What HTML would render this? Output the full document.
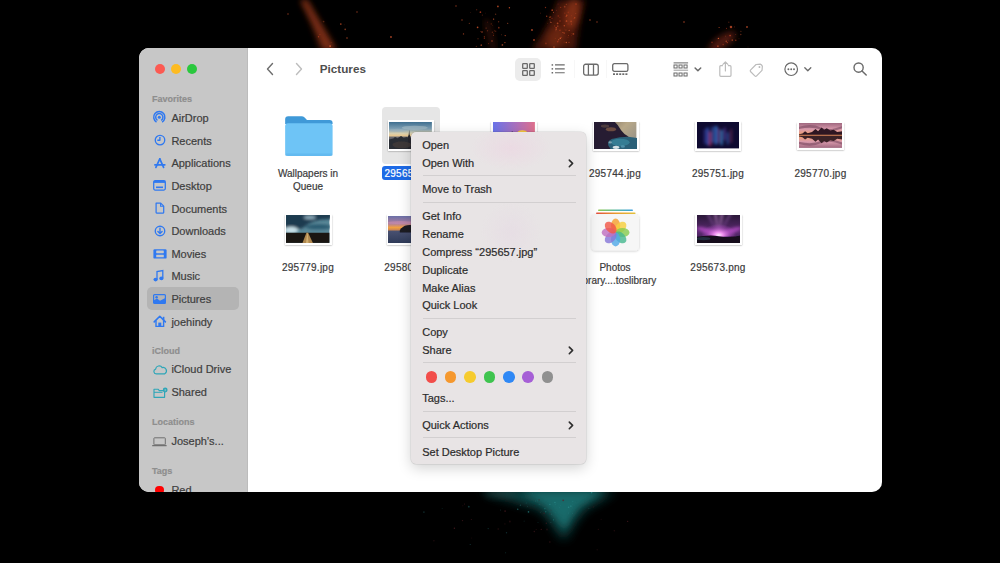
<!DOCTYPE html>
<html><head><meta charset="utf-8">
<style>
*{margin:0;padding:0;box-sizing:border-box}
html,body{width:1000px;height:563px;overflow:hidden;background:#000}
body{position:relative;font-family:"Liberation Sans",sans-serif}
.abs{position:absolute}
svg.abs{overflow:visible}
#bg{position:absolute;left:0;top:0;width:1000px;height:563px}
#win{position:absolute;left:139px;top:48px;width:743px;height:444px;border-radius:10px;overflow:hidden;background:#fff;box-shadow:inset 0 0 0 0.5px rgba(255,255,255,.35)}
#side{position:absolute;left:0;top:0;width:109px;height:444px;background:#c7c7c7;box-shadow:inset -1px 0 0 #bcbcbc}
.t{position:absolute;white-space:nowrap;line-height:1;-webkit-text-stroke:0.2px currentColor}
.si{color:#3e3e3e}
.sh{font-weight:bold;color:#8e8e8e}
.lbl{color:#3b3b3b}
.mi{color:#2b2b2b}
</style></head><body>
<svg id="bg" width="1000" height="563" viewBox="0 0 1000 563">
<defs>
<filter id="b3" x="-50%" y="-50%" width="200%" height="200%"><feGaussianBlur stdDeviation="3"/></filter>
<filter id="b6" x="-50%" y="-50%" width="200%" height="200%"><feGaussianBlur stdDeviation="6"/></filter>
<filter id="b1" x="-50%" y="-50%" width="200%" height="200%"><feGaussianBlur stdDeviation="1"/></filter>
</defs>
<path d="M300 0 L307 0 Q319 20 337 50 L321 50 Q312 22 300 0 Z" fill="#8a3018" filter="url(#b3)" opacity="0.75"/>
<path d="M304 0 Q317 24 331 50" stroke="#b04424" stroke-width="4" fill="none" filter="url(#b3)" opacity="0.45"/>
<path d="M558 0 L585 0 Q578 25 576 50 L532 50 Q550 25 558 0 Z" fill="#5a1e10" filter="url(#b3)" opacity="0.8"/>
<ellipse cx="572" cy="14" rx="7" ry="16" fill="#a8401f" filter="url(#b3)" opacity="0.55" transform="rotate(12 572 14)"/>
<ellipse cx="556" cy="38" rx="8" ry="12" fill="#8a3418" filter="url(#b3)" opacity="0.5" transform="rotate(25 556 38)"/>
<path d="M486 20 Q490 34 494 50" stroke="#5a1e10" stroke-width="6" fill="none" filter="url(#b3)" opacity="0.45"/>
<ellipse cx="722" cy="42" rx="16" ry="6" fill="#6a2412" filter="url(#b3)" opacity="0.75" transform="rotate(-35 722 42)"/>
<circle cx="559.7" cy="30.2" r="0.4" fill="#d04a24" opacity="0.71"/>
<circle cx="571.9" cy="33.8" r="0.55" fill="#d04a24" opacity="0.34"/>
<circle cx="556.2" cy="27.8" r="0.85" fill="#d04a24" opacity="0.71"/>
<circle cx="566.6" cy="30.0" r="0.4" fill="#f06a38" opacity="0.32"/>
<circle cx="564.1" cy="42.1" r="0.55" fill="#b83a1c" opacity="0.51"/>
<circle cx="550.7" cy="16.7" r="0.55" fill="#d04a24" opacity="0.59"/>
<circle cx="556.4" cy="10.2" r="0.4" fill="#d04a24" opacity="0.61"/>
<circle cx="550.9" cy="22.4" r="0.7" fill="#f06a38" opacity="0.59"/>
<circle cx="554.7" cy="25.9" r="0.55" fill="#e0582c" opacity="0.34"/>
<circle cx="558.7" cy="39.8" r="0.7" fill="#f06a38" opacity="0.44"/>
<circle cx="566.5" cy="21.0" r="0.85" fill="#e0582c" opacity="0.68"/>
<circle cx="568.0" cy="37.1" r="0.4" fill="#d04a24" opacity="0.68"/>
<circle cx="545.5" cy="7.5" r="0.7" fill="#b83a1c" opacity="0.65"/>
<circle cx="552.2" cy="10.2" r="0.85" fill="#d04a24" opacity="0.72"/>
<circle cx="571.6" cy="15.8" r="0.4" fill="#d04a24" opacity="0.67"/>
<circle cx="557.7" cy="41.6" r="0.85" fill="#b83a1c" opacity="0.66"/>
<circle cx="568.3" cy="12.4" r="0.85" fill="#b83a1c" opacity="0.38"/>
<circle cx="564.3" cy="25.7" r="0.7" fill="#e0582c" opacity="0.67"/>
<circle cx="545.9" cy="43.4" r="0.85" fill="#d04a24" opacity="0.38"/>
<circle cx="556.1" cy="29.5" r="0.55" fill="#f06a38" opacity="0.73"/>
<circle cx="560.3" cy="38.3" r="0.7" fill="#f06a38" opacity="0.78"/>
<circle cx="565.3" cy="30.1" r="0.55" fill="#e0582c" opacity="0.31"/>
<circle cx="564.8" cy="13.1" r="0.7" fill="#d04a24" opacity="0.37"/>
<circle cx="549.9" cy="17.3" r="0.7" fill="#e0582c" opacity="0.65"/>
<circle cx="549.6" cy="19.8" r="0.4" fill="#f06a38" opacity="0.75"/>
<circle cx="564.7" cy="6.7" r="0.85" fill="#f06a38" opacity="0.35"/>
<circle cx="559.9" cy="17.7" r="0.4" fill="#e0582c" opacity="0.52"/>
<circle cx="571.4" cy="35.8" r="0.4" fill="#d04a24" opacity="0.58"/>
<circle cx="540.6" cy="13.1" r="0.4" fill="#d04a24" opacity="0.74"/>
<circle cx="558.2" cy="16.0" r="0.7" fill="#b83a1c" opacity="0.60"/>
<circle cx="557.6" cy="23.3" r="0.85" fill="#f06a38" opacity="0.54"/>
<circle cx="560.1" cy="30.3" r="0.7" fill="#b83a1c" opacity="0.54"/>
<circle cx="558.1" cy="4.0" r="0.55" fill="#b83a1c" opacity="0.37"/>
<circle cx="560.0" cy="21.0" r="0.7" fill="#d04a24" opacity="0.65"/>
<circle cx="561.4" cy="37.3" r="0.55" fill="#b83a1c" opacity="0.69"/>
<circle cx="546.7" cy="16.3" r="0.7" fill="#e0582c" opacity="0.61"/>
<circle cx="564.2" cy="33.1" r="0.85" fill="#e0582c" opacity="0.40"/>
<circle cx="547.4" cy="23.2" r="0.4" fill="#b83a1c" opacity="0.54"/>
<circle cx="566.3" cy="42.5" r="0.7" fill="#f06a38" opacity="0.70"/>
<circle cx="560.6" cy="7.4" r="0.7" fill="#d04a24" opacity="0.41"/>
<circle cx="562.9" cy="32.5" r="0.55" fill="#f06a38" opacity="0.61"/>
<circle cx="576.0" cy="4.0" r="0.85" fill="#b83a1c" opacity="0.70"/>
<circle cx="573.4" cy="33.9" r="0.85" fill="#e0582c" opacity="0.54"/>
<circle cx="554.0" cy="47.0" r="0.85" fill="#f06a38" opacity="0.50"/>
<circle cx="575.7" cy="13.6" r="0.55" fill="#e0582c" opacity="0.31"/>
<circle cx="553.5" cy="12.3" r="0.55" fill="#f06a38" opacity="0.63"/>
<circle cx="555.3" cy="38.3" r="0.55" fill="#d04a24" opacity="0.31"/>
<circle cx="574.8" cy="17.8" r="0.55" fill="#f06a38" opacity="0.79"/>
<circle cx="568.1" cy="23.9" r="0.55" fill="#b83a1c" opacity="0.43"/>
<circle cx="557.8" cy="26.1" r="0.7" fill="#f06a38" opacity="0.63"/>
<circle cx="566.3" cy="4.3" r="0.55" fill="#e0582c" opacity="0.56"/>
<circle cx="571.6" cy="24.0" r="0.55" fill="#d04a24" opacity="0.69"/>
<circle cx="564.9" cy="29.1" r="0.4" fill="#d04a24" opacity="0.46"/>
<circle cx="550.6" cy="19.7" r="0.4" fill="#d04a24" opacity="0.42"/>
<circle cx="550.5" cy="21.0" r="0.4" fill="#f06a38" opacity="0.46"/>
<circle cx="574.1" cy="18.4" r="0.55" fill="#b83a1c" opacity="0.53"/>
<circle cx="552.0" cy="18.2" r="0.55" fill="#b83a1c" opacity="0.76"/>
<circle cx="566.7" cy="15.3" r="0.85" fill="#e0582c" opacity="0.51"/>
<circle cx="555.9" cy="30.7" r="0.55" fill="#f06a38" opacity="0.34"/>
<circle cx="566.2" cy="16.4" r="0.7" fill="#e0582c" opacity="0.43"/>
<circle cx="568.6" cy="35.6" r="0.4" fill="#f06a38" opacity="0.74"/>
<circle cx="569.0" cy="42.3" r="0.55" fill="#e0582c" opacity="0.65"/>
<circle cx="571.1" cy="21.4" r="0.85" fill="#e0582c" opacity="0.48"/>
<circle cx="569.2" cy="30.4" r="0.7" fill="#f06a38" opacity="0.52"/>
<circle cx="495.7" cy="31.3" r="0.7" fill="#d04a24" opacity="0.36"/>
<circle cx="492.5" cy="25.4" r="0.4" fill="#d04a24" opacity="0.43"/>
<circle cx="505.2" cy="35.6" r="0.7" fill="#e0582c" opacity="0.71"/>
<circle cx="495.6" cy="14.2" r="0.7" fill="#f06a38" opacity="0.37"/>
<circle cx="498.6" cy="21.8" r="0.7" fill="#d04a24" opacity="0.44"/>
<circle cx="487.3" cy="22.1" r="0.4" fill="#b83a1c" opacity="0.77"/>
<circle cx="470.7" cy="12.5" r="0.4" fill="#e0582c" opacity="0.33"/>
<circle cx="493.6" cy="19.1" r="0.7" fill="#f06a38" opacity="0.76"/>
<circle cx="484.3" cy="36.8" r="0.55" fill="#d04a24" opacity="0.78"/>
<circle cx="484.4" cy="38.2" r="0.7" fill="#b83a1c" opacity="0.57"/>
<circle cx="488.6" cy="43.6" r="0.55" fill="#b83a1c" opacity="0.47"/>
<circle cx="494.1" cy="31.1" r="0.4" fill="#d04a24" opacity="0.67"/>
<circle cx="477.6" cy="27.3" r="0.85" fill="#e0582c" opacity="0.77"/>
<circle cx="502.4" cy="44.9" r="0.85" fill="#f06a38" opacity="0.57"/>
<circle cx="509.4" cy="7.8" r="0.7" fill="#e0582c" opacity="0.79"/>
<circle cx="480.4" cy="12.2" r="0.85" fill="#b83a1c" opacity="0.79"/>
<circle cx="486.1" cy="28.1" r="0.7" fill="#f06a38" opacity="0.38"/>
<circle cx="504.9" cy="42.6" r="0.7" fill="#e0582c" opacity="0.65"/>
<circle cx="492.4" cy="32.3" r="0.7" fill="#f06a38" opacity="0.30"/>
<circle cx="478.0" cy="38.8" r="0.7" fill="#e0582c" opacity="0.32"/>
<circle cx="491.2" cy="23.9" r="0.55" fill="#d04a24" opacity="0.47"/>
<circle cx="493.4" cy="35.3" r="0.55" fill="#e0582c" opacity="0.55"/>
<circle cx="494.4" cy="30.3" r="0.4" fill="#e0582c" opacity="0.50"/>
<circle cx="487.5" cy="30.7" r="0.7" fill="#e0582c" opacity="0.34"/>
<circle cx="507.7" cy="23.3" r="0.55" fill="#f06a38" opacity="0.68"/>
<circle cx="482.4" cy="15.1" r="0.7" fill="#e0582c" opacity="0.32"/>
<circle cx="497.9" cy="6.4" r="0.85" fill="#e0582c" opacity="0.75"/>
<circle cx="485.3" cy="13.1" r="0.4" fill="#e0582c" opacity="0.34"/>
<circle cx="501.5" cy="34.8" r="0.4" fill="#f06a38" opacity="0.72"/>
<circle cx="469.3" cy="23.4" r="0.55" fill="#f06a38" opacity="0.43"/>
<circle cx="480.6" cy="31.3" r="0.4" fill="#d04a24" opacity="0.67"/>
<circle cx="463.5" cy="33.9" r="0.7" fill="#e0582c" opacity="0.66"/>
<circle cx="498.8" cy="27.7" r="0.85" fill="#d04a24" opacity="0.54"/>
<circle cx="476.7" cy="9.7" r="0.55" fill="#d04a24" opacity="0.60"/>
<circle cx="476.4" cy="46.4" r="0.7" fill="#e0582c" opacity="0.31"/>
<circle cx="493.8" cy="33.8" r="0.4" fill="#e0582c" opacity="0.64"/>
<circle cx="481.3" cy="45.2" r="0.85" fill="#f06a38" opacity="0.53"/>
<circle cx="730.1" cy="35.5" r="0.85" fill="#d04a24" opacity="0.71"/>
<circle cx="740.8" cy="34.5" r="0.7" fill="#f06a38" opacity="0.40"/>
<circle cx="735.8" cy="34.4" r="0.4" fill="#e0582c" opacity="0.67"/>
<circle cx="727.2" cy="42.6" r="0.7" fill="#d04a24" opacity="0.65"/>
<circle cx="725.3" cy="36.1" r="0.4" fill="#f06a38" opacity="0.64"/>
<circle cx="712.0" cy="42.3" r="0.85" fill="#b83a1c" opacity="0.49"/>
<circle cx="735.8" cy="40.3" r="0.7" fill="#b83a1c" opacity="0.72"/>
<circle cx="748.0" cy="46.9" r="0.4" fill="#b83a1c" opacity="0.43"/>
<circle cx="739.0" cy="38.8" r="0.4" fill="#b83a1c" opacity="0.76"/>
<circle cx="728.8" cy="22.3" r="0.7" fill="#d04a24" opacity="0.33"/>
<circle cx="719.1" cy="27.5" r="0.55" fill="#e0582c" opacity="0.79"/>
<circle cx="718.4" cy="38.4" r="0.7" fill="#f06a38" opacity="0.74"/>
<circle cx="734.4" cy="26.9" r="0.55" fill="#d04a24" opacity="0.32"/>
<circle cx="726.5" cy="28.4" r="0.55" fill="#b83a1c" opacity="0.54"/>
<circle cx="740.9" cy="31.3" r="0.55" fill="#f06a38" opacity="0.51"/>
<circle cx="726.2" cy="41.3" r="0.7" fill="#f06a38" opacity="0.63"/>
<circle cx="723.2" cy="44.5" r="0.85" fill="#d04a24" opacity="0.38"/>
<circle cx="732.3" cy="40.1" r="0.85" fill="#e0582c" opacity="0.53"/>
<circle cx="717.9" cy="46.2" r="0.85" fill="#e0582c" opacity="0.57"/>
<circle cx="728.3" cy="40.3" r="0.4" fill="#b83a1c" opacity="0.42"/>
<circle cx="345.2" cy="29.3" r="0.85" fill="#f06a38" opacity="0.51"/>
<circle cx="318.5" cy="36.8" r="0.7" fill="#d04a24" opacity="0.55"/>
<circle cx="319.9" cy="34.6" r="0.55" fill="#d04a24" opacity="0.44"/>
<circle cx="330.1" cy="46.1" r="0.85" fill="#f06a38" opacity="0.78"/>
<circle cx="344.2" cy="24.8" r="0.4" fill="#e0582c" opacity="0.32"/>
<circle cx="323.6" cy="21.5" r="0.85" fill="#f06a38" opacity="0.30"/>
<circle cx="340.8" cy="24.0" r="0.85" fill="#e0582c" opacity="0.69"/>
<circle cx="331.1" cy="42.5" r="0.4" fill="#f06a38" opacity="0.34"/>
<circle cx="288" cy="14" r="0.64" fill="#e05a30" opacity="0.7"/>
<circle cx="357" cy="12" r="0.64" fill="#e05a30" opacity="0.7"/>
<circle cx="391" cy="37" r="0.96" fill="#e05a30" opacity="0.7"/>
<circle cx="347" cy="38" r="0.72" fill="#e05a30" opacity="0.7"/>
<circle cx="532" cy="30" r="0.96" fill="#e05a30" opacity="0.7"/>
<circle cx="534" cy="40" r="0.88" fill="#e05a30" opacity="0.7"/>
<circle cx="590" cy="20" r="0.72" fill="#e05a30" opacity="0.7"/>
<circle cx="597" cy="22" r="0.64" fill="#e05a30" opacity="0.7"/>
<circle cx="684" cy="22" r="0.80" fill="#e05a30" opacity="0.7"/>
<circle cx="731" cy="27" r="1.28" fill="#e05a30" opacity="0.7"/>
<circle cx="747" cy="27" r="0.88" fill="#e05a30" opacity="0.7"/>
<circle cx="456" cy="6" r="0.64" fill="#e05a30" opacity="0.7"/>
<circle cx="462" cy="20" r="0.64" fill="#e05a30" opacity="0.7"/>
<circle cx="482" cy="32" r="0.80" fill="#e05a30" opacity="0.7"/>
<circle cx="492" cy="41" r="0.72" fill="#e05a30" opacity="0.7"/>
<path d="M478 490 L615 490 Q600 500 585 508 Q572 522 564 540 Q552 520 540 508 Q515 500 478 490 Z" fill="#166262" filter="url(#b6)" opacity="0.9"/>
<path d="M520 490 L605 490 Q592 498 578 506 Q570 516 565 528 Q556 514 546 504 Q532 496 520 490 Z" fill="#1d7676" filter="url(#b3)" opacity="0.6"/>
<ellipse cx="500" cy="494" rx="16" ry="4" fill="#2a5252" filter="url(#b3)" opacity="0.45"/>
<circle cx="555.2" cy="504.5" r="0.4" fill="#2a8888" opacity="0.58"/>
<circle cx="588.9" cy="508.7" r="0.4" fill="#349a9a" opacity="0.43"/>
<circle cx="532.7" cy="493.3" r="0.4" fill="#2a8888" opacity="0.34"/>
<circle cx="526.2" cy="503.0" r="0.6" fill="#1e6a6a" opacity="0.41"/>
<circle cx="552.4" cy="504.1" r="0.6" fill="#1e6a6a" opacity="0.44"/>
<circle cx="538.0" cy="522.5" r="0.4" fill="#1e6a6a" opacity="0.56"/>
<circle cx="549.9" cy="504.3" r="0.6" fill="#349a9a" opacity="0.62"/>
<circle cx="568.6" cy="507.2" r="0.8" fill="#349a9a" opacity="0.51"/>
<circle cx="553.5" cy="519.8" r="0.6" fill="#2a8888" opacity="0.55"/>
<circle cx="540.7" cy="512.6" r="0.4" fill="#1e6a6a" opacity="0.67"/>
<circle cx="540.1" cy="504.8" r="0.4" fill="#1e6a6a" opacity="0.68"/>
<circle cx="563.5" cy="515.5" r="0.6" fill="#1e6a6a" opacity="0.35"/>
<circle cx="533.5" cy="495.4" r="0.4" fill="#1e6a6a" opacity="0.51"/>
<circle cx="568.3" cy="513.0" r="0.4" fill="#2a8888" opacity="0.79"/>
<circle cx="559.5" cy="507.5" r="0.4" fill="#2a8888" opacity="0.50"/>
<circle cx="591.6" cy="492.6" r="0.8" fill="#2a8888" opacity="0.80"/>
<circle cx="572.9" cy="501.3" r="0.4" fill="#349a9a" opacity="0.77"/>
<circle cx="554.9" cy="502.5" r="0.8" fill="#349a9a" opacity="0.49"/>
<circle cx="541.1" cy="511.4" r="0.4" fill="#2a8888" opacity="0.30"/>
<circle cx="551.2" cy="514.1" r="0.4" fill="#349a9a" opacity="0.78"/>
<circle cx="560.5" cy="514.1" r="0.6" fill="#1e6a6a" opacity="0.34"/>
<circle cx="551.0" cy="498.7" r="0.8" fill="#1e6a6a" opacity="0.40"/>
<circle cx="524.1" cy="521.1" r="0.4" fill="#349a9a" opacity="0.51"/>
<circle cx="560.7" cy="505.7" r="0.4" fill="#2a8888" opacity="0.43"/>
<circle cx="545.7" cy="511.8" r="0.8" fill="#2a8888" opacity="0.43"/>
<circle cx="551.0" cy="496.5" r="0.6" fill="#1e6a6a" opacity="0.30"/>
<circle cx="570.9" cy="506.1" r="0.6" fill="#349a9a" opacity="0.78"/>
<circle cx="575.8" cy="502.2" r="0.6" fill="#1e6a6a" opacity="0.71"/>
<circle cx="572.3" cy="513.7" r="0.4" fill="#349a9a" opacity="0.45"/>
<circle cx="550.5" cy="499.6" r="0.4" fill="#1e6a6a" opacity="0.73"/>
<circle cx="517.7" cy="509.3" r="0.8" fill="#2a8888" opacity="0.56"/>
<circle cx="544.9" cy="508.7" r="0.6" fill="#2a8888" opacity="0.62"/>
<circle cx="527.6" cy="506.4" r="0.4" fill="#1e6a6a" opacity="0.74"/>
<circle cx="572.2" cy="504.4" r="0.4" fill="#2a8888" opacity="0.35"/>
<circle cx="520.4" cy="505.2" r="0.6" fill="#2a8888" opacity="0.42"/>
<circle cx="528.5" cy="511.9" r="0.8" fill="#2a8888" opacity="0.67"/>
<circle cx="573.6" cy="492.9" r="0.4" fill="#1e6a6a" opacity="0.45"/>
<circle cx="535.6" cy="501.1" r="0.8" fill="#1e6a6a" opacity="0.40"/>
<circle cx="555.3" cy="512.5" r="0.4" fill="#1e6a6a" opacity="0.74"/>
<circle cx="537.8" cy="500.8" r="0.6" fill="#1e6a6a" opacity="0.80"/>
<circle cx="539.1" cy="504.7" r="0.4" fill="#349a9a" opacity="0.53"/>
<circle cx="557.0" cy="505.2" r="0.4" fill="#1e6a6a" opacity="0.76"/>
<circle cx="572.8" cy="507.1" r="0.4" fill="#2a8888" opacity="0.39"/>
<circle cx="583.7" cy="502.8" r="0.4" fill="#1e6a6a" opacity="0.56"/>
<circle cx="549.8" cy="542.0" r="0.9" fill="#4a1a20" opacity="0.35"/>
<circle cx="462.8" cy="505.8" r="0.5" fill="#4a1a20" opacity="0.48"/>
<circle cx="541.3" cy="529.4" r="0.7" fill="#4a1a20" opacity="0.60"/>
<circle cx="500.5" cy="510.1" r="0.5" fill="#1d5558" opacity="0.50"/>
<circle cx="471.7" cy="538.1" r="0.5" fill="#5a2028" opacity="0.32"/>
<circle cx="462.5" cy="520.6" r="0.7" fill="#4a1a20" opacity="0.70"/>
<circle cx="505.1" cy="511.1" r="0.9" fill="#4a1a20" opacity="0.63"/>
<circle cx="488.2" cy="528.6" r="0.7" fill="#1d5558" opacity="0.51"/>
<circle cx="598.4" cy="529.4" r="0.7" fill="#3a1418" opacity="0.51"/>
<circle cx="498.3" cy="529.0" r="0.9" fill="#3a1418" opacity="0.40"/>
<circle cx="627.6" cy="521.4" r="0.7" fill="#4a1a20" opacity="0.71"/>
<circle cx="433.9" cy="540.7" r="0.7" fill="#5a2028" opacity="0.36"/>
<circle cx="546.3" cy="523.2" r="0.7" fill="#4a1a20" opacity="0.59"/>
<circle cx="593.4" cy="507.0" r="0.5" fill="#5a2028" opacity="0.47"/>
<circle cx="536.2" cy="529.4" r="0.5" fill="#4a1a20" opacity="0.49"/>
<circle cx="534.3" cy="505.6" r="0.5" fill="#3a1418" opacity="0.46"/>
<circle cx="464.5" cy="504.0" r="0.5" fill="#5a2028" opacity="0.62"/>
<circle cx="563.2" cy="500.3" r="0.9" fill="#5a2028" opacity="0.71"/>
<circle cx="534.3" cy="531.5" r="0.7" fill="#5a2028" opacity="0.49"/>
<circle cx="547.0" cy="529.5" r="0.9" fill="#5a2028" opacity="0.32"/>
<circle cx="442.2" cy="508.4" r="0.5" fill="#1d5558" opacity="0.36"/>
<circle cx="468.8" cy="506.7" r="0.9" fill="#1d5558" opacity="0.62"/>
<circle cx="506.5" cy="532.7" r="0.7" fill="#1d5558" opacity="0.52"/>
<circle cx="509.9" cy="521.5" r="0.9" fill="#3a1418" opacity="0.53"/>
<circle cx="454.4" cy="528.2" r="0.7" fill="#5a2028" opacity="0.71"/>
<circle cx="504.9" cy="523.9" r="0.7" fill="#3a1418" opacity="0.48"/>
<circle cx="539.1" cy="499.8" r="0.9" fill="#4a1a20" opacity="0.32"/>
<circle cx="597.2" cy="549.7" r="0.7" fill="#4a1a20" opacity="0.33"/>
<circle cx="471.3" cy="519.6" r="0.5" fill="#4a1a20" opacity="0.73"/>
<circle cx="601.1" cy="519.3" r="0.5" fill="#5a2028" opacity="0.37"/>
<circle cx="551.0" cy="510.2" r="0.5" fill="#5a2028" opacity="0.33"/>
<circle cx="470.2" cy="544.4" r="0.5" fill="#1d5558" opacity="0.75"/>
<circle cx="505.6" cy="552.7" r="0.5" fill="#1d5558" opacity="0.55"/>
<circle cx="549.9" cy="514.1" r="0.7" fill="#5a2028" opacity="0.46"/>
<circle cx="550.9" cy="522.6" r="0.5" fill="#1d5558" opacity="0.64"/>
<circle cx="544.1" cy="513.3" r="0.7" fill="#4a1a20" opacity="0.68"/>
<circle cx="614.3" cy="530.7" r="0.7" fill="#4a1a20" opacity="0.43"/>
<circle cx="423.9" cy="512.1" r="0.9" fill="#1d5558" opacity="0.43"/>
</svg>
<div id="win">
<div id="side"></div>
<div class="abs" style="left:15.75px;top:16.25px;width:10.00px;height:10.00px;border-radius:50%;background:#fc5a52"></div>
<div class="abs" style="left:31.90px;top:16.25px;width:10.00px;height:10.00px;border-radius:50%;background:#fdbb22"></div>
<div class="abs" style="left:48.00px;top:16.25px;width:10.00px;height:10.00px;border-radius:50%;background:#2ac83e"></div>
<div class="t sh" style="left:13.00px;top:46.80px;font-size:9px;">Favorites</div>
<div class="abs" style="left:8.00px;top:239.00px;width:91.50px;height:22.50px;border-radius:5px;background:#b4b4b4"></div>
<div class="t si" style="left:32.40px;top:65.10px;font-size:11px;">AirDrop</div>
<div class="t si" style="left:32.40px;top:87.72px;font-size:11px;">Recents</div>
<div class="t si" style="left:32.40px;top:110.34px;font-size:11px;">Applications</div>
<div class="t si" style="left:32.40px;top:132.96px;font-size:11px;">Desktop</div>
<div class="t si" style="left:32.40px;top:155.58px;font-size:11px;">Documents</div>
<div class="t si" style="left:32.40px;top:178.20px;font-size:11px;">Downloads</div>
<div class="t si" style="left:32.40px;top:200.82px;font-size:11px;">Movies</div>
<div class="t si" style="left:32.40px;top:223.44px;font-size:11px;">Music</div>
<div class="t si" style="left:32.40px;top:246.06px;font-size:11px;">Pictures</div>
<div class="t si" style="left:32.40px;top:268.68px;font-size:11px;">joehindy</div>
<div class="t sh" style="left:13.00px;top:299.10px;font-size:9px;">iCloud</div>
<div class="t si" style="left:32.40px;top:316.20px;font-size:11px;">iCloud Drive</div>
<div class="t si" style="left:32.40px;top:338.80px;font-size:11px;">Shared</div>
<div class="t sh" style="left:13.00px;top:370.00px;font-size:9px;">Locations</div>
<div class="t si" style="left:32.40px;top:388.00px;font-size:11px;">Joseph’s...</div>
<div class="t sh" style="left:13.00px;top:418.80px;font-size:9px;">Tags</div>
<div class="t si" style="left:32.40px;top:436.50px;font-size:11px;">Red</div>
<div class="abs" style="left:16.00px;top:437.50px;width:8.50px;height:8.50px;border-radius:50%;background:#fe0000"></div>
<svg class="abs" style="left:14.20px;top:63.20px;" width="13" height="12" viewBox="0 0 13 12"><g fill="none" stroke="#3079f0" stroke-width="1.5"><path d="M3.5 11.05 A5.6 5.6 0 1 1 9.1 11.05"/><path d="M4.5 9.3 A3.6 3.6 0 1 1 8.1 9.3"/></g><circle cx="6.3" cy="6.2" r="1.5" fill="#3079f0"/></svg>
<svg class="abs" style="left:14.50px;top:86.00px;" width="12" height="12" viewBox="0 0 12 12"><circle cx="6" cy="6.1" r="4.75" fill="none" stroke="#3079f0" stroke-width="1.35"/><path d="M5.9 3 V6.3 H3.3" fill="none" stroke="#3079f0" stroke-width="1.4" stroke-linejoin="round"/></svg>
<svg class="abs" style="left:14.50px;top:108.50px;" width="12" height="12" viewBox="0 0 12 12"><g stroke="#3079f0" stroke-width="1.7" stroke-linecap="round" fill="none"><path d="M5.8 1.8 L1.9 10.4"/><path d="M5.8 1.8 L9.6 10.4"/><path d="M0.9 7.8 H10.8"/></g></svg>
<svg class="abs" style="left:13.50px;top:132.00px;" width="13" height="11" viewBox="0 0 13 11"><rect x="0.7" y="0.7" width="11.6" height="9.4" rx="1.5" fill="none" stroke="#3079f0" stroke-width="1.3"/><rect x="0.7" y="0.7" width="11.6" height="2.2" fill="#3079f0"/><rect x="3" y="6.5" width="7" height="1.6" fill="#3079f0"/></svg>
<svg class="abs" style="left:16.00px;top:154.30px;" width="10" height="13" viewBox="0 0 10 13"><path d="M1.1 1.1 H5.7 L8.7 4.1 V10.6 Q8.7 11.1 8.2 11.1 H1.6 Q1.1 11.1 1.1 10.6 Z" fill="none" stroke="#3079f0" stroke-width="1.25" stroke-linejoin="round"/><path d="M5.6 1.1 V4.2 H8.7" fill="none" stroke="#3079f0" stroke-width="1.1"/></svg>
<svg class="abs" style="left:14.50px;top:176.50px;" width="12" height="12" viewBox="0 0 12 12"><circle cx="6" cy="6" r="4.75" fill="none" stroke="#3079f0" stroke-width="1.35"/><path d="M6 3.2 V8.4 M3.9 6.4 L6 8.5 L8.1 6.4" fill="none" stroke="#3079f0" stroke-width="1.35" stroke-linecap="round" stroke-linejoin="round"/></svg>
<svg class="abs" style="left:13.50px;top:199.50px;" width="14" height="12" viewBox="0 0 14 12"><rect x="0.4" y="1.3" width="13.2" height="9.3" rx="1.2" fill="#3079f0"/><rect x="3.2" y="2.6" width="7.6" height="2.6" rx="0.4" fill="#c7c7c7"/><rect x="3.2" y="6.7" width="7.6" height="2.6" rx="0.4" fill="#c7c7c7"/></svg>
<svg class="abs" style="left:14.20px;top:222.00px;" width="11" height="12" viewBox="0 0 11 12"><path d="M4 9.5 V1.6 L9.8 0.6 V8" fill="none" stroke="#3079f0" stroke-width="1.3"/><ellipse cx="2.6" cy="9.6" rx="2.1" ry="1.8" fill="#3079f0"/><ellipse cx="8.4" cy="8.4" rx="2.1" ry="1.8" fill="#3079f0"/></svg>
<svg class="abs" style="left:14.30px;top:246.00px;" width="13" height="10" viewBox="0 0 13 10"><rect x="0.6" y="0.6" width="11.8" height="8.8" rx="1" fill="none" stroke="#3079f0" stroke-width="1.2"/><path d="M0.6 9.4 L0.6 6.5 L4 4.5 L7 6.8 L12.4 4 L12.4 9.4 Z" fill="#3079f0"/><circle cx="3.6" cy="3.2" r="1.2" fill="#3079f0"/></svg>
<svg class="abs" style="left:13.50px;top:266.50px;" width="14" height="13" viewBox="0 0 14 13"><path d="M1.2 6.9 L6.8 1.3 L12.4 6.9" fill="none" stroke="#3079f0" stroke-width="1.6" stroke-linecap="round" stroke-linejoin="round"/><rect x="9.8" y="1.8" width="1.6" height="3.4" fill="#3079f0"/><path d="M3 5.6 V11.4 H10.6 V5.6" fill="none" stroke="#3079f0" stroke-width="1.4"/><rect x="5.3" y="7.6" width="3" height="3.8" fill="#3079f0"/></svg>
<svg class="abs" style="left:13.50px;top:317.00px;" width="15" height="10" viewBox="0 0 15 10"><path d="M3.2 8.8 A2.4 2.4 0 0 1 2.6 4.1 A3.6 3.6 0 0 1 9.2 2.6 A3.4 3.4 0 0 1 11.8 8.8 Z" fill="none" stroke="#2ea6b8" stroke-width="1.2" stroke-linejoin="round"/></svg>
<svg class="abs" style="left:13.50px;top:339.00px;" width="15" height="12" viewBox="0 0 15 12"><path d="M1 2.2 H5 L6.3 3.6 H11.6 V10.3 H1 Z" fill="none" stroke="#2ea6b8" stroke-width="1.15" stroke-linejoin="round"/><path d="M1 5.3 H9.5" stroke="#2ea6b8" stroke-width="1"/><circle cx="12.2" cy="3" r="2.4" fill="#2ea6b8"/><path d="M12.2 2 V4.2" stroke="#c7c7c7" stroke-width="0.7"/></svg>
<svg class="abs" style="left:13.00px;top:388.50px;" width="16" height="10" viewBox="0 0 16 10"><rect x="1.9" y="0.8" width="11.4" height="7" rx="0.6" fill="none" stroke="#707070" stroke-width="1"/><path d="M0.2 8.6 H14.6" stroke="#707070" stroke-width="1.1"/></svg>
<svg class="abs" style="left:126.00px;top:14.00px;" width="10" height="14" viewBox="0 0 10 14"><path d="M7.5 1.5 L2.5 7 L7.5 12.5" fill="none" stroke="#6d6d6d" stroke-width="1.4" stroke-linecap="round" stroke-linejoin="round"/></svg>
<svg class="abs" style="left:154.50px;top:14.00px;" width="10" height="14" viewBox="0 0 10 14"><path d="M2.5 1.5 L7.5 7 L2.5 12.5" fill="none" stroke="#bdbdbd" stroke-width="1.4" stroke-linecap="round" stroke-linejoin="round"/></svg>
<div class="t " style="left:180.80px;top:15.20px;font-size:11.7px;color:#4e4e4e;font-weight:bold;-webkit-text-stroke:0;">Pictures</div>
<div class="abs" style="left:376.00px;top:10.00px;width:25.50px;height:22.50px;border-radius:5px;background:#ececec"></div>
<svg class="abs" style="left:382.50px;top:14.50px;" width="13" height="13" viewBox="0 0 13 13"><g fill="none" stroke="#6a6a6a" stroke-width="1.3"><rect x="0.7" y="0.7" width="4.6" height="4.6" rx="0.6"/><rect x="7.7" y="0.7" width="4.6" height="4.6" rx="0.6"/><rect x="0.7" y="7.7" width="4.6" height="4.6" rx="0.6"/><rect x="7.7" y="7.7" width="4.6" height="4.6" rx="0.6"/></g></svg>
<svg class="abs" style="left:410.50px;top:15.00px;" width="16" height="11" viewBox="0 0 16 11"><g fill="#6a6a6a"><rect x="1.6" y="1.2" width="1.5" height="1.5"/><rect x="1.6" y="5.1" width="1.5" height="1.5"/><rect x="1.6" y="9.0" width="1.5" height="1.5"/></g><g stroke="#6a6a6a" stroke-width="1.2"><path d="M5 1.95 H14.7"/><path d="M5 5.85 H14.7"/><path d="M5 9.75 H14.7"/></g></svg>
<div class="abs" style="left:434.80px;top:12.00px;width:0.80px;height:18.00px;background:#f7f7f7"></div>
<svg class="abs" style="left:442.50px;top:14.50px;" width="17" height="13" viewBox="0 0 17 13"><g fill="none" stroke="#6a6a6a" stroke-width="1.3"><rect x="1.65" y="1.25" width="14.6" height="10.8" rx="2"/><path d="M6.4 1.25 V12.05 M11.5 1.25 V12.05"/></g></svg>
<div class="abs" style="left:467.00px;top:12.00px;width:0.80px;height:18.00px;background:#f7f7f7"></div>
<svg class="abs" style="left:473.00px;top:14.50px;" width="17" height="13" viewBox="0 0 17 13"><rect x="0.7" y="0.7" width="15.2" height="7.6" rx="1.6" fill="none" stroke="#6a6a6a" stroke-width="1.3"/><g fill="#6a6a6a"><rect x="1" y="10.3" width="2" height="1.7"/><rect x="4.1" y="10.3" width="2" height="1.7"/><rect x="7.2" y="10.3" width="2" height="1.7"/><rect x="10.3" y="10.3" width="2" height="1.7"/><rect x="13.4" y="10.3" width="2" height="1.7"/></g></svg>
<svg class="abs" style="left:533.50px;top:13.50px;" width="16" height="15" viewBox="0 0 16 15"><path d="M0.6 0.9 H15.1" stroke="#6a6a6a" stroke-width="1"/><path d="M0.6 8.2 H15.1" stroke="#9a9a9a" stroke-width="1"/><path fill-rule="evenodd" fill="#6a6a6a" d="M0.50 2.5 h4.1 v3.9 h-4.1 Z M1.50 3.5 h2.1 v1.9 h-2.1 Z"/><path fill-rule="evenodd" fill="#6a6a6a" d="M5.50 2.5 h4.1 v3.9 h-4.1 Z M6.50 3.5 h2.1 v1.9 h-2.1 Z"/><path fill-rule="evenodd" fill="#6a6a6a" d="M10.50 2.5 h4.1 v3.9 h-4.1 Z M11.50 3.5 h2.1 v1.9 h-2.1 Z"/><path fill-rule="evenodd" fill="#6a6a6a" d="M0.50 10.6 h4.1 v3.9 h-4.1 Z M1.50 11.6 h2.1 v1.9 h-2.1 Z"/><path fill-rule="evenodd" fill="#6a6a6a" d="M5.50 10.6 h4.1 v3.9 h-4.1 Z M6.50 11.6 h2.1 v1.9 h-2.1 Z"/><path fill-rule="evenodd" fill="#6a6a6a" d="M10.50 10.6 h4.1 v3.9 h-4.1 Z M11.50 11.6 h2.1 v1.9 h-2.1 Z"/></svg>
<svg class="abs" style="left:554.50px;top:18.80px;" width="8" height="6" viewBox="0 0 8 6"><path d="M1.1 1 L3.9 3.8 L6.7 1" fill="none" stroke="#6a6a6a" stroke-width="1.5" stroke-linecap="round" stroke-linejoin="round"/></svg>
<svg class="abs" style="left:579.50px;top:12.50px;" width="13" height="16" viewBox="0 0 13 16"><path d="M3.9 4.7 H1.8 Q0.8 4.7 0.8 5.7 V14.3 Q0.8 15.3 1.8 15.3 H11 Q12 15.3 12 14.3 V5.7 Q12 4.7 11 4.7 H8.9" fill="none" stroke="#bcbcbc" stroke-width="1.2"/><path d="M6.4 9.9 V1 M3.9 3.4 L6.4 0.9 L8.9 3.4" fill="none" stroke="#bcbcbc" stroke-width="1.2" stroke-linecap="round" stroke-linejoin="round"/></svg>
<svg class="abs" style="left:609.50px;top:13.00px;" width="16" height="16" viewBox="0 0 16 16"><g transform="translate(8.2 8.3) rotate(-45)"><path d="M-5 -4.2 H2.6 L5.8 -1.5 Q6.6 0 5.8 1.5 L2.6 4.2 H-5 Q-6.3 4.2 -6.3 2.9 V-2.9 Q-6.3 -4.2 -5 -4.2 Z" fill="none" stroke="#bcbcbc" stroke-width="1.2" stroke-linejoin="round"/><circle cx="3.2" cy="0" r="0.95" fill="#bcbcbc"/></g></svg>
<svg class="abs" style="left:644.50px;top:14.00px;" width="15" height="15" viewBox="0 0 15 15"><circle cx="7.2" cy="7.2" r="6.3" fill="none" stroke="#6a6a6a" stroke-width="1.2"/><g fill="#6a6a6a"><circle cx="4.4" cy="7.2" r="0.95"/><circle cx="7.2" cy="7.2" r="0.95"/><circle cx="10" cy="7.2" r="0.95"/></g></svg>
<svg class="abs" style="left:664.50px;top:19.00px;" width="8" height="5" viewBox="0 0 8 5"><path d="M0.8 0.8 L3.8 3.8 L6.8 0.8" fill="none" stroke="#6a6a6a" stroke-width="1.3" stroke-linecap="round" stroke-linejoin="round"/></svg>
<svg class="abs" style="left:714.00px;top:14.00px;" width="15" height="14" viewBox="0 0 15 14"><circle cx="5.6" cy="5.6" r="4.6" fill="none" stroke="#6a6a6a" stroke-width="1.4"/><path d="M9 9 L13.2 13" stroke="#6a6a6a" stroke-width="1.5" stroke-linecap="round"/></svg>
<svg class="abs" style="left:144.50px;top:67.00px;" width="50" height="43" viewBox="0 0 50 43"><path d="M1.15 9 V4.2 Q1.15 1.2 4.2 1.2 H17.5 Q19.3 1.2 20.6 2.6 L23 5 H45.6 Q48.6 5 48.6 8 V9 Z" fill="#3f99d8"/><rect x="1.15" y="8.3" width="47.45" height="32.8" rx="3" fill="#6ec4f6"/><rect x="1.15" y="38.5" width="47.45" height="2.6" rx="1.3" fill="#5cb4ec" opacity="0.6"/></svg>
<div class="t lbl" style="left:109.00px;top:121.00px;width:120px;text-align:center;font-size:10px;">Wallpapers in</div>
<div class="t lbl" style="left:109.00px;top:134.40px;width:120px;text-align:center;font-size:10px;">Queue</div>
<div class="abs" style="left:243.00px;top:59.00px;width:58.00px;height:57.00px;border-radius:4px;background:#e6e6e6"></div>
<div class="abs" style="left:248.50px;top:72.00px;width:46.50px;height:31.00px;background:#fff;box-shadow:0 0.5px 1.6px rgba(0,0,0,.35)"></div>
<svg class="abs" style="left:250.30px;top:73.80px;overflow:hidden" width="42.90" height="27.40" viewBox="0 0 100 66" preserveAspectRatio="none"><defs><filter id="t1" x="-20%" y="-20%" width="140%" height="140%"><feGaussianBlur stdDeviation="4"/></filter><filter id="t1s" x="-20%" y="-20%" width="140%" height="140%"><feGaussianBlur stdDeviation="1.8"/></filter></defs><defs><linearGradient id="g1" x1="0" y1="0" x2="0" y2="1"><stop offset="0" stop-color="#3f6f90"/><stop offset="0.25" stop-color="#7fa0b4"/><stop offset="0.42" stop-color="#d8cfae"/><stop offset="0.5" stop-color="#e8c890"/><stop offset="0.56" stop-color="#6a6a70"/><stop offset="1" stop-color="#2a2a30"/></linearGradient></defs><rect width="100" height="66" fill="url(#g1)"/><g filter="url(#t1s)"><path d="M0 42 L10 40 L14 36 L20 39 L28 34 L34 38 L42 36 L48 40 L56 37 L64 39 L70 38 L78 41 L90 39 L100 41 L100 66 L0 66 Z" fill="#2c2e36"/><path d="M44 66 L44 36 L46 30 L47 18 L48 30 L50 36 L50 66 Z" fill="#26282e"/><ellipse cx="30" cy="55" rx="22" ry="8" fill="#4a4038" opacity="0.6"/><ellipse cx="75" cy="58" rx="20" ry="6" fill="#3a3a44" opacity="0.6"/><ellipse cx="60" cy="14" rx="30" ry="5" fill="#a8bcc4" opacity="0.6"/><ellipse cx="20" cy="20" rx="20" ry="4" fill="#9ab2c0" opacity="0.5"/></g></svg>
<div class="abs" style="left:352.00px;top:72.50px;width:45.50px;height:31.00px;background:#fff;box-shadow:0 0.5px 1.6px rgba(0,0,0,.35)"></div>
<svg class="abs" style="left:353.80px;top:74.30px;overflow:hidden" width="41.90" height="27.40" viewBox="0 0 100 66" preserveAspectRatio="none"><defs><filter id="t2" x="-20%" y="-20%" width="140%" height="140%"><feGaussianBlur stdDeviation="4"/></filter><filter id="t2s" x="-20%" y="-20%" width="140%" height="140%"><feGaussianBlur stdDeviation="1.8"/></filter></defs><defs><linearGradient id="g2" x1="0" y1="0" x2="1" y2="0"><stop offset="0" stop-color="#6a74ea"/><stop offset="0.6" stop-color="#b070b8"/><stop offset="1" stop-color="#e0708c"/></linearGradient></defs><rect width="100" height="66" fill="url(#g2)"/><circle cx="70" cy="40" r="20" fill="#ffd040"/><path d="M30 30 L36 24 L40 28 L46 22 L52 30 L52 66 L30 66 Z" fill="#2a2240"/></svg>
<div class="abs" style="left:453.50px;top:72.50px;width:46.00px;height:30.50px;background:#fff;box-shadow:0 0.5px 1.6px rgba(0,0,0,.35)"></div>
<svg class="abs" style="left:455.30px;top:74.30px;overflow:hidden" width="42.40" height="26.90" viewBox="0 0 100 66" preserveAspectRatio="none"><defs><filter id="t3" x="-20%" y="-20%" width="140%" height="140%"><feGaussianBlur stdDeviation="4"/></filter><filter id="t3s" x="-20%" y="-20%" width="140%" height="140%"><feGaussianBlur stdDeviation="1.8"/></filter></defs><defs><linearGradient id="g3" x1="0" y1="0" x2="1" y2="0.6"><stop offset="0" stop-color="#6a5a50"/><stop offset="0.6" stop-color="#b8a888"/><stop offset="1" stop-color="#9a9488"/></linearGradient></defs><rect width="100" height="66" fill="url(#g3)"/><g filter="url(#t3s)"><path d="M30 44 Q55 34 80 36 Q95 38 105 40 L105 70 L40 70 Q28 56 30 44 Z" fill="#2a6078"/><ellipse cx="62" cy="50" rx="22" ry="9" fill="#3a8aa0" opacity="0.7"/><path d="M-5 -5 L45 -5 Q58 8 64 20 Q72 32 82 36 Q60 36 42 42 Q30 48 34 58 Q38 66 44 70 L-5 70 Z" fill="#251d30"/><ellipse cx="40" cy="18" rx="12" ry="5" fill="#8a6048" opacity="0.7"/><ellipse cx="26" cy="10" rx="10" ry="4" fill="#6a5048" opacity="0.6"/><ellipse cx="52" cy="62" rx="8" ry="4" fill="#e6eef0" opacity="0.9"/><ellipse cx="38" cy="50" rx="4" ry="3" fill="#d0dce0" opacity="0.5"/><ellipse cx="68" cy="60" rx="5" ry="3" fill="#6ab0c8" opacity="0.6"/></g></svg>
<div class="abs" style="left:556.00px;top:72.50px;width:46.00px;height:30.00px;background:#fff;box-shadow:0 0.5px 1.6px rgba(0,0,0,.35)"></div>
<svg class="abs" style="left:557.80px;top:74.30px;overflow:hidden" width="42.40" height="26.40" viewBox="0 0 100 66" preserveAspectRatio="none"><defs><filter id="t4" x="-20%" y="-20%" width="140%" height="140%"><feGaussianBlur stdDeviation="4"/></filter><filter id="t4s" x="-20%" y="-20%" width="140%" height="140%"><feGaussianBlur stdDeviation="1.8"/></filter></defs><rect width="100" height="66" fill="#0e0a30"/><g filter="url(#t4)"><rect x="16" y="18" width="5" height="36" fill="#3a3aa8" opacity="0.6"/><rect x="22" y="14" width="6" height="44" fill="#3a6ad8" opacity="0.7"/><rect x="28" y="24" width="6" height="36" fill="#b02a50" opacity="0.75"/><rect x="34" y="12" width="6" height="40" fill="#4a70d0" opacity="0.6"/><rect x="42" y="10" width="6" height="46" fill="#3a88e8" opacity="0.8"/><rect x="49" y="16" width="5" height="36" fill="#8a3a90" opacity="0.6"/><rect x="55" y="20" width="6" height="38" fill="#3aa0e8" opacity="0.65"/><rect x="63" y="14" width="5" height="32" fill="#6a40b0" opacity="0.6"/><rect x="70" y="26" width="5" height="30" fill="#3070d0" opacity="0.6"/><rect x="78" y="18" width="5" height="34" fill="#a03060" opacity="0.45"/></g></svg>
<div class="abs" style="left:658.00px;top:73.50px;width:47.00px;height:28.50px;background:#fff;box-shadow:0 0.5px 1.6px rgba(0,0,0,.35)"></div>
<svg class="abs" style="left:659.80px;top:75.30px;overflow:hidden" width="43.40" height="24.90" viewBox="0 0 100 66" preserveAspectRatio="none"><defs><filter id="t5" x="-20%" y="-20%" width="140%" height="140%"><feGaussianBlur stdDeviation="4"/></filter><filter id="t5s" x="-20%" y="-20%" width="140%" height="140%"><feGaussianBlur stdDeviation="1.8"/></filter></defs><defs><linearGradient id="g5" x1="0" y1="0" x2="0" y2="1"><stop offset="0" stop-color="#a06880"/><stop offset="0.25" stop-color="#d89aac"/><stop offset="0.47" stop-color="#f0a070"/><stop offset="0.53" stop-color="#f0a070"/><stop offset="0.75" stop-color="#d89aac"/><stop offset="1" stop-color="#a06880"/></linearGradient></defs><rect width="100" height="66" fill="url(#g5)"/><g filter="url(#t5s)"><path d="M0 10 Q30 0 50 12 Q70 22 100 8 L100 14 Q70 28 50 18 Q30 8 0 16 Z" fill="#7a4a60" opacity="0.6"/><path d="M0 56 Q30 66 50 54 Q70 44 100 58 L100 52 Q70 38 50 48 Q30 58 0 50 Z" fill="#7a4a60" opacity="0.6"/><path d="M0 30 L8 28 L14 22 L20 27 L30 24 L38 16 L44 22 L52 12 L58 18 L64 14 L72 20 L80 18 L88 24 L100 22 L100 33 L0 33 Z" fill="#2e1820"/><path d="M0 36 L8 38 L14 44 L20 39 L30 42 L38 50 L44 44 L52 54 L58 48 L64 52 L72 46 L80 48 L88 42 L100 44 L100 33 L0 33 Z" fill="#3a2028"/><rect x="0" y="31" width="100" height="3" fill="#f09060" opacity="0.7"/></g></svg>
<div class="abs" style="left:145.50px;top:165.50px;width:47.00px;height:31.50px;background:#fff;box-shadow:0 0.5px 1.6px rgba(0,0,0,.35)"></div>
<svg class="abs" style="left:147.30px;top:167.30px;overflow:hidden" width="43.40" height="27.90" viewBox="0 0 100 66" preserveAspectRatio="none"><defs><filter id="t6" x="-20%" y="-20%" width="140%" height="140%"><feGaussianBlur stdDeviation="4"/></filter><filter id="t6s" x="-20%" y="-20%" width="140%" height="140%"><feGaussianBlur stdDeviation="1.8"/></filter></defs><rect width="100" height="66" fill="#5a8898"/><g filter="url(#t6)"><path d="M-5 -5 L105 -5 L105 10 Q60 8 40 30 Q20 40 -5 30 Z" fill="#1a3a50"/><ellipse cx="75" cy="28" rx="30" ry="6" fill="#2a5a70"/><ellipse cx="12" cy="36" rx="16" ry="8" fill="#c8e0e8"/><ellipse cx="55" cy="6" rx="14" ry="4" fill="#90b0c0"/></g><rect x="0" y="42" width="100" height="24" fill="#1a1612"/><path d="M47 42 L51 42 L62 66 L38 66 Z" fill="#b08850" filter="url(#t6s)"/><path d="M49 42 L49.8 42 L52 66 L46 66 Z" fill="#e0c080" filter="url(#t6s)" opacity="0.7"/></svg>
<div class="abs" style="left:247.50px;top:166.00px;width:46.00px;height:31.00px;background:#fff;box-shadow:0 0.5px 1.6px rgba(0,0,0,.35)"></div>
<svg class="abs" style="left:249.30px;top:167.80px;overflow:hidden" width="42.40" height="27.40" viewBox="0 0 100 66" preserveAspectRatio="none"><defs><filter id="t7" x="-20%" y="-20%" width="140%" height="140%"><feGaussianBlur stdDeviation="4"/></filter><filter id="t7s" x="-20%" y="-20%" width="140%" height="140%"><feGaussianBlur stdDeviation="1.8"/></filter></defs><defs><linearGradient id="g7" x1="0" y1="0" x2="0" y2="1"><stop offset="0" stop-color="#6a70a8"/><stop offset="0.28" stop-color="#b080a0"/><stop offset="0.42" stop-color="#f0a040"/><stop offset="0.5" stop-color="#d08850"/><stop offset="0.56" stop-color="#485070"/><stop offset="1" stop-color="#2e3a58"/></linearGradient></defs><rect width="100" height="66" fill="url(#g7)"/><ellipse cx="30" cy="16" rx="30" ry="4" fill="#d090b0" opacity="0.5" filter="url(#t7s)"/><path d="M28 34 Q34 24 45 22 Q60 20 100 28 L100 40 L28 40 Z" fill="#1a1a24" filter="url(#t7s)"/></svg>
<div class="abs" style="left:556.00px;top:165.50px;width:47.00px;height:31.50px;background:#fff;box-shadow:0 0.5px 1.6px rgba(0,0,0,.35)"></div>
<svg class="abs" style="left:557.80px;top:167.30px;overflow:hidden" width="43.40" height="27.90" viewBox="0 0 100 66" preserveAspectRatio="none"><defs><filter id="t8" x="-20%" y="-20%" width="140%" height="140%"><feGaussianBlur stdDeviation="4"/></filter><filter id="t8s" x="-20%" y="-20%" width="140%" height="140%"><feGaussianBlur stdDeviation="1.8"/></filter></defs><defs><linearGradient id="g8b" x1="0" y1="0" x2="0" y2="1"><stop offset="0" stop-color="#2a1838"/><stop offset="0.6" stop-color="#5a2a70"/><stop offset="1" stop-color="#3a2050"/></linearGradient><radialGradient id="g8" cx="0.5" cy="0.72" r="0.4"><stop offset="0" stop-color="#ffe8ff"/><stop offset="0.25" stop-color="#f090f0"/><stop offset="0.7" stop-color="#b050c0" stop-opacity="0.5"/><stop offset="1" stop-color="#b050c0" stop-opacity="0"/></radialGradient></defs><rect width="100" height="66" fill="url(#g8b)"/><g filter="url(#t8)"><ellipse cx="24" cy="38" rx="26" ry="6" fill="#c050d0" opacity="0.7" transform="rotate(18 24 38)"/><ellipse cx="78" cy="38" rx="26" ry="6" fill="#c050d0" opacity="0.7" transform="rotate(-18 78 38)"/><path d="M50 48 L38 -5 L46 -5 Z" fill="#e0a0e8" opacity="0.5"/><path d="M50 48 L54 -5 L62 -5 Z" fill="#e0a0e8" opacity="0.5"/><path d="M50 48 L20 -5 L28 -5 Z" fill="#b070c8" opacity="0.4"/><path d="M50 48 L74 -5 L82 -5 Z" fill="#b070c8" opacity="0.4"/></g><rect width="100" height="66" fill="url(#g8)"/><path d="M-5 52 Q30 46 50 50 Q75 54 105 48 L105 70 L-5 70 Z" fill="#120c1c" filter="url(#t8s)"/><ellipse cx="15" cy="56" rx="16" ry="4" fill="#2a5060" opacity="0.5" filter="url(#t8s)"/></svg>
<div class="abs" style="left:243.00px;top:118.00px;width:58.00px;height:14.00px;border-radius:3px;background:#1d6ae6"></div>
<div class="t " style="left:245.50px;top:121.00px;font-size:10px;color:#fff;letter-spacing:0.25px;">295657.jpg</div>
<div class="t lbl" style="left:416.00px;top:121.20px;width:120px;text-align:center;font-size:10px;letter-spacing:0.25px;">295744.jpg</div>
<div class="t lbl" style="left:519.00px;top:121.20px;width:120px;text-align:center;font-size:10px;letter-spacing:0.25px;">295751.jpg</div>
<div class="t lbl" style="left:621.50px;top:121.20px;width:120px;text-align:center;font-size:10px;letter-spacing:0.25px;">295770.jpg</div>
<div class="t lbl" style="left:109.00px;top:215.00px;width:120px;text-align:center;font-size:10px;letter-spacing:0.25px;">295779.jpg</div>
<div class="t " style="left:245.30px;top:215.00px;font-size:10px;color:#3b3b3b;letter-spacing:0.25px;">29580</div>
<svg class="abs" style="left:452.00px;top:160.50px;" width="49" height="42" viewBox="0 0 49 42"><defs><filter id="ps" x="-20%" y="-20%" width="140%" height="140%"><feDropShadow dx="0" dy="0.5" stdDeviation="0.8" flood-opacity="0.25"/></filter><linearGradient id="st1" x1="0" x2="1"><stop offset="0" stop-color="#8cc84a"/><stop offset="0.5" stop-color="#5ab8a0"/><stop offset="1" stop-color="#3aa0e0"/></linearGradient><linearGradient id="st2" x1="0" x2="1"><stop offset="0" stop-color="#e85040"/><stop offset="0.5" stop-color="#f0a030"/><stop offset="1" stop-color="#e8c840"/></linearGradient></defs><rect x="7" y="0.5" width="35" height="1.6" rx="0.8" fill="url(#st1)"/><rect x="5" y="3.5" width="39.6" height="1.6" rx="0.8" fill="url(#st2)"/><rect x="0.6" y="5.5" width="47.4" height="36" rx="4" fill="#f6f6f6" filter="url(#ps)"/><ellipse cx="24.6" cy="16.6" rx="4.6" ry="7" fill="#f5a030" opacity="0.82" transform="rotate(0 24.6 23.5)"/><ellipse cx="24.6" cy="16.6" rx="4.6" ry="7" fill="#f6d040" opacity="0.82" transform="rotate(45 24.6 23.5)"/><ellipse cx="24.6" cy="16.6" rx="4.6" ry="7" fill="#88cc50" opacity="0.82" transform="rotate(90 24.6 23.5)"/><ellipse cx="24.6" cy="16.6" rx="4.6" ry="7" fill="#48b890" opacity="0.82" transform="rotate(135 24.6 23.5)"/><ellipse cx="24.6" cy="16.6" rx="4.6" ry="7" fill="#50a8e8" opacity="0.82" transform="rotate(180 24.6 23.5)"/><ellipse cx="24.6" cy="16.6" rx="4.6" ry="7" fill="#8878d8" opacity="0.82" transform="rotate(225 24.6 23.5)"/><ellipse cx="24.6" cy="16.6" rx="4.6" ry="7" fill="#c070c0" opacity="0.82" transform="rotate(270 24.6 23.5)"/><ellipse cx="24.6" cy="16.6" rx="4.6" ry="7" fill="#f05848" opacity="0.82" transform="rotate(315 24.6 23.5)"/></svg>
<div class="t lbl" style="left:416.00px;top:214.60px;width:120px;text-align:center;font-size:10px;">Photos</div>
<div class="t lbl" style="left:416.50px;top:227.80px;width:120px;text-align:center;font-size:10px;">Library....toslibrary</div>
<div class="t lbl" style="left:519.00px;top:215.00px;width:120px;text-align:center;font-size:10px;letter-spacing:0.25px;">295673.png</div>
<div class="abs" style="left:272px;top:83.5px;width:175px;height:332.5px;border-radius:5px;background:radial-gradient(ellipse 40px 22px at 100px 16px,rgba(236,214,226,.7),rgba(236,214,226,0)),radial-gradient(ellipse 30px 30px at 100px 100px,rgba(230,218,228,.6),rgba(230,218,228,0)),#e8e4e5;box-shadow:0 0 0 0.5px rgba(0,0,0,.12),0 4px 14px rgba(0,0,0,.18)"></div>
<div class="t mi" style="left:283.20px;top:92.10px;font-size:11px;">Open</div>
<div class="t mi" style="left:283.20px;top:109.70px;font-size:11px;">Open With</div>
<div class="abs" style="left:283.80px;top:127.00px;width:153.00px;height:1.00px;background:#d2cfd0"></div>
<div class="t mi" style="left:283.20px;top:136.20px;font-size:11px;">Move to Trash</div>
<div class="abs" style="left:283.80px;top:154.00px;width:153.00px;height:1.00px;background:#d2cfd0"></div>
<div class="t mi" style="left:283.20px;top:163.00px;font-size:11px;">Get Info</div>
<div class="t mi" style="left:283.20px;top:181.20px;font-size:11px;">Rename</div>
<div class="t mi" style="left:283.20px;top:199.00px;font-size:11px;">Compress “295657.jpg”</div>
<div class="t mi" style="left:283.20px;top:216.80px;font-size:11px;">Duplicate</div>
<div class="t mi" style="left:283.20px;top:234.50px;font-size:11px;">Make Alias</div>
<div class="t mi" style="left:283.20px;top:252.20px;font-size:11px;">Quick Look</div>
<div class="abs" style="left:283.80px;top:269.60px;width:153.00px;height:1.00px;background:#d2cfd0"></div>
<div class="t mi" style="left:283.20px;top:279.00px;font-size:11px;">Copy</div>
<div class="t mi" style="left:283.20px;top:296.60px;font-size:11px;">Share</div>
<div class="abs" style="left:283.80px;top:314.20px;width:153.00px;height:1.00px;background:#d2cfd0"></div>
<div class="abs" style="left:286.50px;top:323.30px;width:11.60px;height:11.60px;border-radius:50%;background:#f24d4a"></div>
<div class="abs" style="left:305.87px;top:323.30px;width:11.60px;height:11.60px;border-radius:50%;background:#f5982e"></div>
<div class="abs" style="left:325.24px;top:323.30px;width:11.60px;height:11.60px;border-radius:50%;background:#f6cb2e"></div>
<div class="abs" style="left:344.61px;top:323.30px;width:11.60px;height:11.60px;border-radius:50%;background:#3fc44f"></div>
<div class="abs" style="left:363.98px;top:323.30px;width:11.60px;height:11.60px;border-radius:50%;background:#2f88f5"></div>
<div class="abs" style="left:383.35px;top:323.30px;width:11.60px;height:11.60px;border-radius:50%;background:#a65fd6"></div>
<div class="abs" style="left:402.72px;top:323.30px;width:11.60px;height:11.60px;border-radius:50%;background:#909090"></div>
<div class="t mi" style="left:283.20px;top:344.60px;font-size:11px;">Tags...</div>
<div class="abs" style="left:283.80px;top:363.20px;width:153.00px;height:1.00px;background:#d2cfd0"></div>
<div class="t mi" style="left:283.20px;top:372.30px;font-size:11px;">Quick Actions</div>
<div class="abs" style="left:283.80px;top:389.40px;width:153.00px;height:1.00px;background:#d2cfd0"></div>
<div class="t mi" style="left:283.20px;top:398.90px;font-size:11px;">Set Desktop Picture</div>
<svg class="abs" style="left:429.20px;top:110.60px;" width="6" height="9" viewBox="0 0 6 9"><path d="M1.3 1.1 L4.6 4.4 L1.3 7.7" fill="none" stroke="#2e2e2e" stroke-width="1.6" stroke-linecap="round" stroke-linejoin="round"/></svg>
<svg class="abs" style="left:429.20px;top:298.00px;" width="6" height="9" viewBox="0 0 6 9"><path d="M1.3 1.1 L4.6 4.4 L1.3 7.7" fill="none" stroke="#2e2e2e" stroke-width="1.6" stroke-linecap="round" stroke-linejoin="round"/></svg>
<svg class="abs" style="left:429.20px;top:373.20px;" width="6" height="9" viewBox="0 0 6 9"><path d="M1.3 1.1 L4.6 4.4 L1.3 7.7" fill="none" stroke="#2e2e2e" stroke-width="1.6" stroke-linecap="round" stroke-linejoin="round"/></svg>
</div>
</body></html>
